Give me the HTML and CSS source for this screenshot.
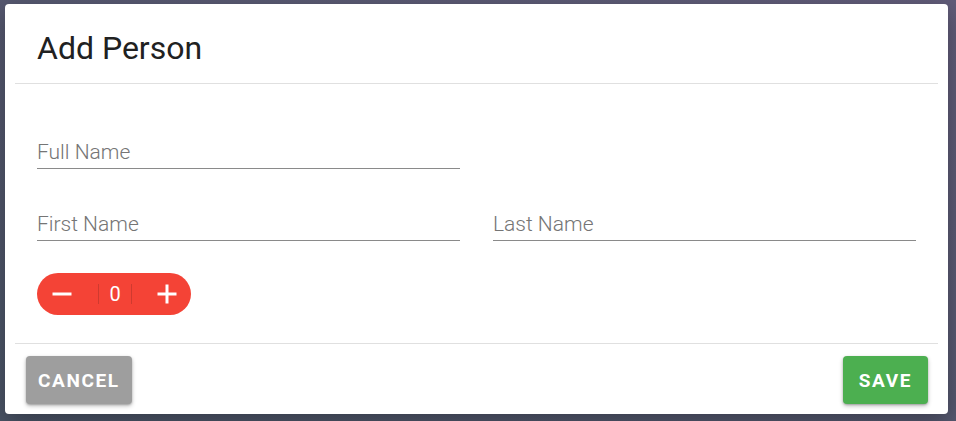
FILE: index.html
```html
<!DOCTYPE html>
<html lang="en">
<head>
  <meta charset="UTF-8">
  <meta name="viewport" content="width=device-width, initial-scale=1.0">
  <title>Add Person</title>
  <link rel="stylesheet" href="styles.css">
</head>
<body>
  <div class="dialog">
    <h2 class="dialog-title">Add Person</h2>

    <form class="dialog-content" id="personForm">
      <div class="row">
        <input type="text" class="field" id="fullName" placeholder="Full Name">
      </div>
      <div class="row">
        <input type="text" class="field" id="firstName" placeholder="First Name">
        <input type="text" class="field" id="lastName" placeholder="Last Name">
      </div>

      <div class="stepper">
        <button type="button" class="step-btn" aria-label="Decrease">
          <svg width="20" height="20" viewBox="0 0 20 20"><line x1="0.5" y1="10" x2="19.5" y2="10" stroke="#fff" stroke-width="3"/></svg>
        </button>
        <span class="step-sep"></span>
        <span class="step-value">0</span>
        <span class="step-sep"></span>
        <button type="button" class="step-btn" aria-label="Increase">
          <svg width="20" height="20" viewBox="0 0 20 20"><line x1="0.5" y1="10" x2="19.5" y2="10" stroke="#fff" stroke-width="3"/><line x1="10" y1="0.5" x2="10" y2="19.5" stroke="#fff" stroke-width="3"/></svg>
        </button>
      </div>
    </form>

    <div class="dialog-actions">
      <button type="button" class="btn btn-cancel">Cancel</button>
      <button type="submit" form="personForm" class="btn btn-save">Save</button>
    </div>
  </div>
</body>
</html>
```

FILE: styles.css
```css
body {
  margin: 0;
  height: 421px;
  padding: 4px 8px 0 5px;
  box-sizing: border-box;
  font-family: Roboto, "Liberation Sans", sans-serif;
  background: linear-gradient(to top right, #4a5466, #615c79);
}
.dialog {
  background: #fff;
  border-radius: 4px;
  box-shadow: 0 8px 24px rgba(0, 0, 0, 0.3);
}
.dialog-title {
  margin: 0 10px;
  padding: 24px 22px 15px;
  font-size: 32px;
  font-weight: 400;
  line-height: 40px;
  color: #212121;
  border-bottom: 1px solid #e0e0e0;
}
.dialog-content {
  margin: 0 10px;
  padding: 52px 22px 28px;
}
.row {
  display: grid;
  grid-template-columns: 1fr 1fr;
  column-gap: 33px;
  margin-bottom: 39px;
}
.row:nth-child(2) {
  margin-bottom: 32px;
}
.field {
  font-family: inherit;
  font-size: 21px;
  font-weight: 300;
  line-height: 24px;
  height: 33px;
  padding: 4px 0;
  box-sizing: border-box;
  border: none;
  border-bottom: 1px solid #8a8a8a;
  outline: none;
  color: #212121;
  background: transparent;
}
.field::placeholder {
  color: #757575;
}
.stepper {
  display: inline-flex;
  align-items: center;
  height: 42px;
  background: #f44336;
  border-radius: 21px;
  color: #fff;
  vertical-align: top;
}
.step-btn {
  width: 49px;
  height: 42px;
  padding: 0;
  border: none;
  background: transparent;
  display: flex;
  align-items: center;
  justify-content: center;
  cursor: pointer;
}
.step-sep {
  width: 1px;
  height: 20px;
  background: #cf3a2f;
  margin-left: 12px;
}
.step-sep + .step-value + .step-sep {
  margin-left: 0;
  margin-right: 10px;
}
.step-value {
  width: 32px;
  text-align: center;
  font-size: 20px;
}
.dialog-actions {
  margin: 0 10px;
  padding: 12px 10px 10px 11px;
  border-top: 1px solid #e0e0e0;
  display: flex;
  justify-content: space-between;
}
.btn {
  height: 48px;
  padding: 0 12px;
  border: none;
  border-radius: 4px;
  font-family: inherit;
  font-size: 19px;
  font-weight: 700;
  letter-spacing: 1.6px;
  text-transform: uppercase;
  color: #fff;
  cursor: pointer;
  box-shadow: 0 2px 4px rgba(0, 0, 0, 0.25), 0 1px 2px rgba(0, 0, 0, 0.2);
}
.btn-cancel {
  background: #9e9e9e;
}
.btn-save {
  background: #4caf50;
  padding: 0 16px;
}
```
